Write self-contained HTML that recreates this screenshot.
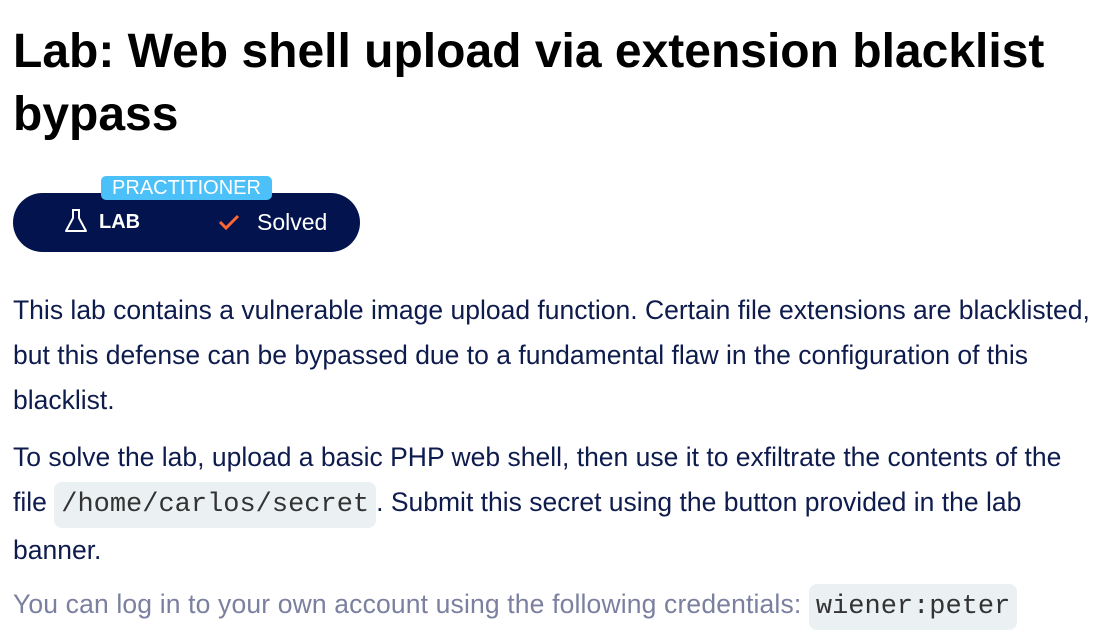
<!DOCTYPE html>
<html><head><style>
body{margin:0;background:#fff;font-family:"Liberation Sans",Arial,sans-serif;color:#0e1b4d;}
h1{position:absolute;left:13px;top:20px;margin:0;font-size:48px;line-height:63px;font-weight:bold;color:#000;width:1100px}
.pill{position:absolute;left:13px;top:193px;width:347px;height:59px;border-radius:30px;background:#03134d;}
.tag{position:absolute;left:101px;top:176px;width:171px;height:24px;border-radius:5px;background:#4cc0f8;color:#fff;font-size:20px;line-height:25px;text-align:center}
.lab{position:absolute;left:99px;top:211px;color:#fff;font-weight:bold;font-size:20px}
.sol{position:absolute;left:257px;top:209px;color:#fff;font-size:23px}
p{position:absolute;left:13px;margin:0;font-size:26.5px;line-height:45px;width:1100px}
code{font-family:"Liberation Mono",monospace;background:#ebf0f2;border-radius:8px;padding:8px 7px;color:#333;font-size:27px;font-weight:normal;letter-spacing:0}
</style></head><body>
<h1>Lab: Web shell upload via extension blacklist bypass</h1>
<div class="pill"></div>
<div class="tag">PRACTITIONER</div>
<svg style="position:absolute;left:64px;top:208px" width="24" height="26" viewBox="0 0 24 26"><path d="M8 2h8M9 2v8L2 23h20L15 10V2" fill="none" stroke="#fff" stroke-width="2" stroke-linejoin="round"/></svg>
<div class="lab">LAB</div>
<svg style="position:absolute;left:218px;top:213px" width="22" height="18" viewBox="0 0 22 18"><path d="M2 9l6 6L20 3" fill="none" stroke="#ff6633" stroke-width="3"/></svg>
<div class="sol">Solved</div>
<p style="top:288px">This lab contains a vulnerable image upload function. Certain file extensions are blacklisted, but this defense can be bypassed due to a fundamental flaw in the configuration of this blacklist.</p>
<p style="top:435px;width:1080px">To solve the lab, upload a basic PHP web shell, then use it to exfiltrate the contents of the file <code>/home/carlos/secret</code>. Submit this secret using the button provided in the lab banner.</p>
<p style="top:582px;color:#7b80a0;letter-spacing:0.15px">You can log in to your own account using the following credentials: <code>wiener:peter</code></p>
</body></html>
